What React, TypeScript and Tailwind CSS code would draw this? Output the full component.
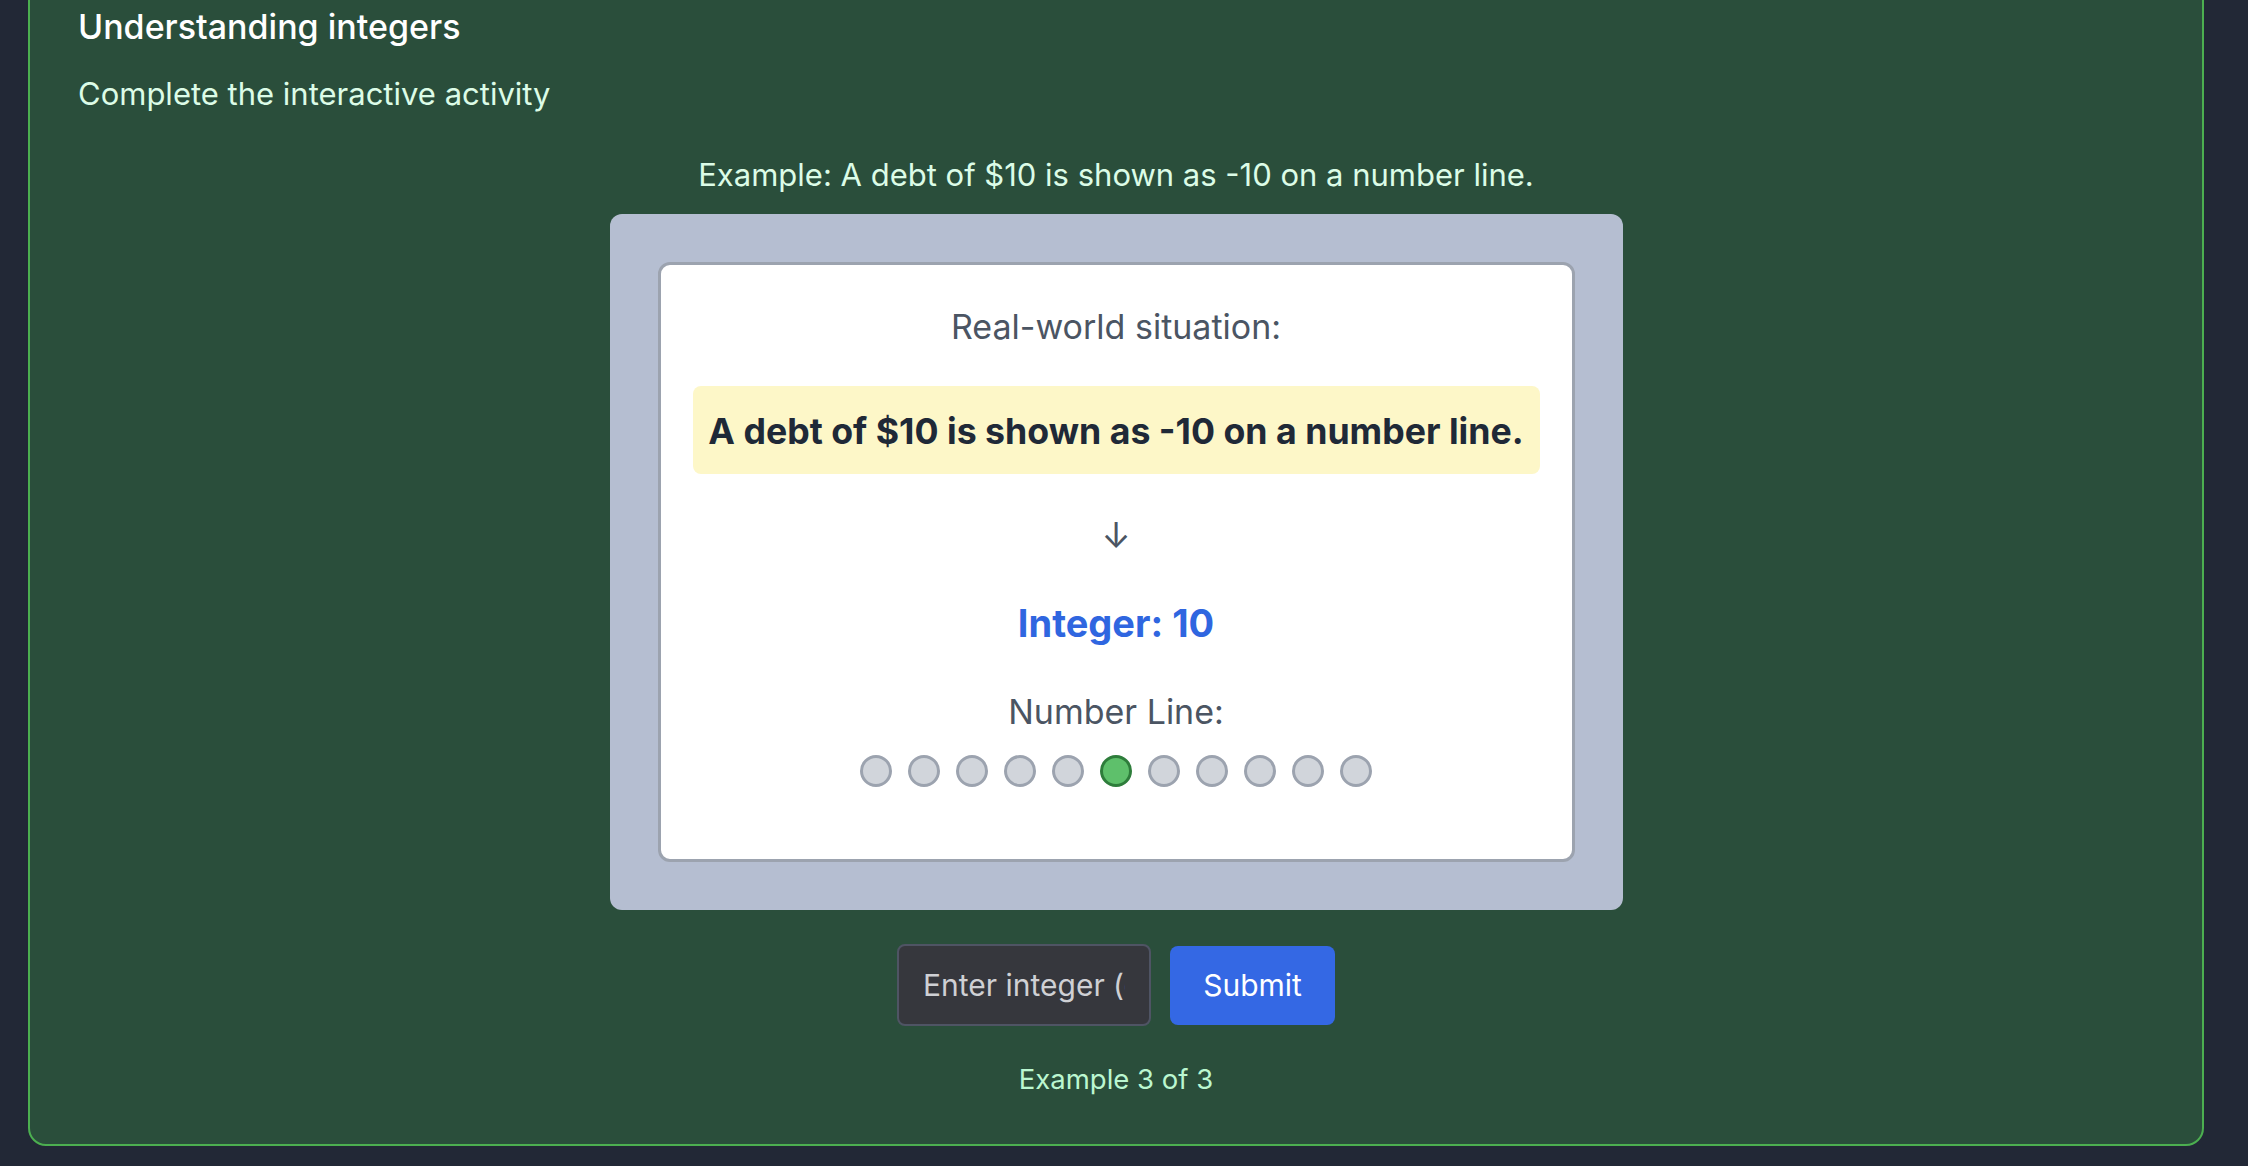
import React from "react";

export default function App() {
  const dots = Array.from({ length: 11 }, (_, i) => i);
  return (
    <div
      className="min-h-screen w-full bg-[#222836] overflow-hidden"
      style={{ fontFamily: "Inter, 'Noto Sans', sans-serif" }}
    >
      <div className="ml-[28px] mt-[-43px] w-[2176px] rounded-[18px] border-2 border-[#4caf50] bg-[#2a4e3b] px-[48px] pt-[48px] pb-[46px]">
        <h2 className="text-[34px] leading-[40px] font-medium text-white">
          Understanding integers
        </h2>
        <p className="mt-[28px] text-[31px] leading-[38px] text-[#dcfce7]">
          Complete the interactive activity
        </p>
        <div className="flex flex-col items-center">
          <p className="mt-[43px] text-[31px] leading-[38px] text-[#dcfce7]">
            Example: A debt of $10 is shown as -10 on a number line.
          </p>
          <div className="mt-[20px] w-[1013px] rounded-[12px] bg-[#b5bed1] p-[48px]">
            <div className="flex flex-col items-center rounded-[12px] border-[3px] border-[#9ca3af] bg-white px-[32px] pt-[41px] pb-[72px]">
              <p className="text-[34px] leading-[42px] text-[#4b5563]">
                Real-world situation:
              </p>
              <div className="mt-[38px] flex h-[88px] w-full items-center justify-center rounded-[8px] bg-[#fdf7c8]">
                <span className="mt-[2px] text-[35.7px] font-bold leading-[48px] text-[#1f2937]">
                  A debt of $10 is shown as -10 on a number line.
                </span>
              </div>
              <div className="mt-[40px] text-[35px] leading-[42px] text-[#4b5563]">
                ↓
              </div>
              <p className="mt-[43px] text-[38px] font-bold leading-[48px] text-[#2f66e0]">
                Integer: 10
              </p>
              <p className="mt-[44px] text-[34px] leading-[42px] text-[#4b5563]">
                Number Line:
              </p>
              <div className="mt-[22px] flex gap-[16px]">
                {dots.map((i) =>
                  i === 5 ? (
                    <div
                      key={i}
                      className="h-[32px] w-[32px] rounded-full border-[3px] border-[#2e7d3b] bg-[#5ec06b]"
                    />
                  ) : (
                    <div
                      key={i}
                      className="h-[32px] w-[32px] rounded-full border-[3px] border-[#9ca3af] bg-[#d1d5db]"
                    />
                  )
                )}
              </div>
            </div>
          </div>
          <div className="mt-[34px] flex items-center gap-[19px]">
            <input
              type="text"
              placeholder="Enter integer (e.g. -10)"
              className="h-[82px] w-[254px] rounded-[8px] border-2 border-[#4f5464] bg-[#36373d] px-[24px] text-[30px] text-white placeholder:text-[#cfd0d4] outline-none"
              style={{ fontFamily: "Inter, 'Noto Sans', sans-serif" }}
            />
            <button
              className="h-[79px] w-[165px] rounded-[8px] bg-[#3468e4] text-[30px] text-white"
              style={{ fontFamily: "Inter, 'Noto Sans', sans-serif" }}
            >
              Submit
            </button>
          </div>
          <p className="mt-[34px] text-[27.5px] leading-[38px] text-[#bbf7d0]">
            Example 3 of 3
          </p>
        </div>
      </div>
    </div>
  );
}
